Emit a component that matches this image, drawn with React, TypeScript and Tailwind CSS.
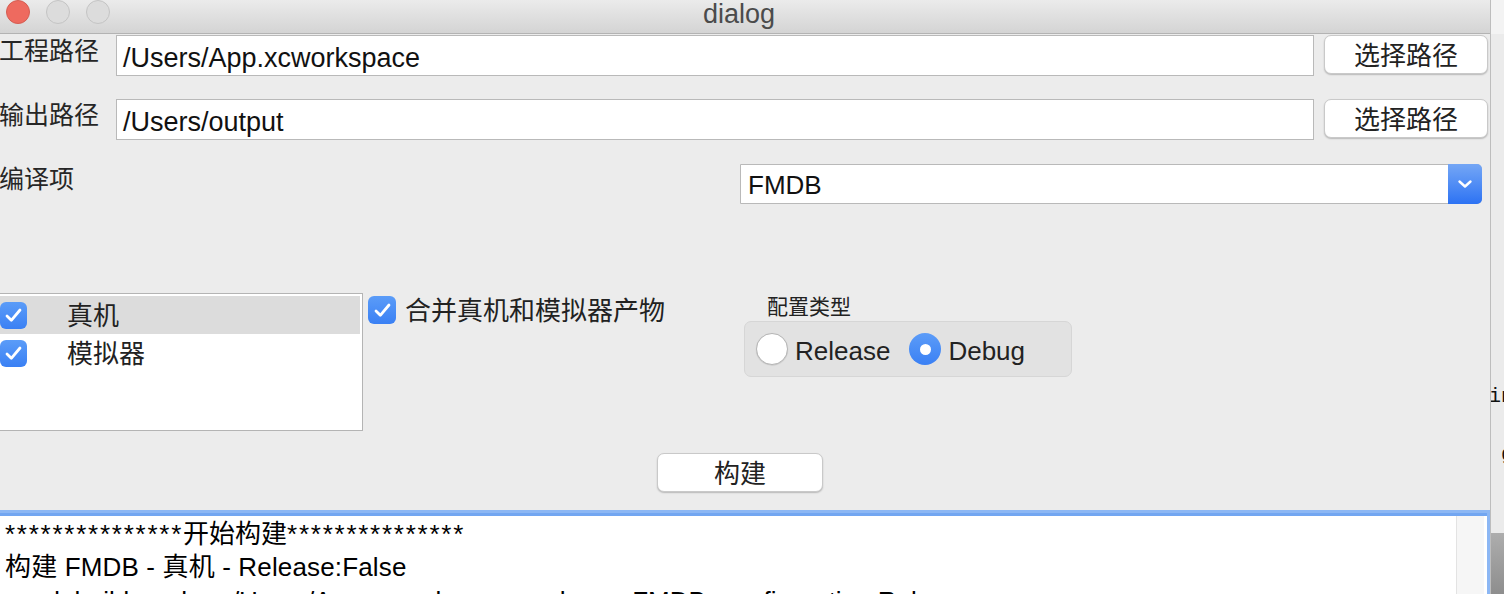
import React from "react";

function Check({ className = "" }: { className?: string }) {
  return (
    <div className={`w-[27px] h-[27px] rounded-[6px] bg-gradient-to-b from-[#5b9cf8] to-[#3a80f4] flex items-center justify-center shrink-0 ${className}`}>
      <svg width="21" height="21" viewBox="0 0 21 21">
        <path d="M4 11 L8.3 15.3 L17 5" fill="none" stroke="#fff" strokeWidth="2.8" strokeLinecap="round" strokeLinejoin="round" />
      </svg>
    </div>
  );
}

function MacButton({ label, className = "" }: { label: string; className?: string }) {
  return (
    <div className={`bg-white rounded-[7px] border border-[#c9c9c9] shadow-[0_1px_1.5px_rgba(0,0,0,0.22)] flex items-center justify-center pt-[3px] text-[26px] text-[#222] ${className}`}>
      {label}
    </div>
  );
}

function Stars() {
  return <span className="tracking-[1.75px]">***************</span>;
}

export default function App() {
  return (
    <div className="w-[1504px] h-[594px] overflow-hidden flex bg-[#ececec] font-['Liberation_Sans','Noto_Sans_CJK_SC',sans-serif]">
      <div className="w-[1491px] h-[594px] shrink-0 flex flex-col border-r border-[#bdbdbd] bg-[#ececec]">
        {/* title bar */}
        <div className="h-[34px] shrink-0 flex items-start bg-gradient-to-b from-[#ebebeb] to-[#d4d4d4] border-b border-[#b3b3b3]">
          <div className="w-[110px] flex items-start gap-[16px] pl-[6px]">
            <div className="w-[24px] h-[24px] rounded-full bg-[#ee6a5f] border border-[#d55d52]" />
            <div className="w-[24px] h-[24px] rounded-full bg-[#dcdcdc] border border-[#c4c4c4]" />
            <div className="w-[24px] h-[24px] rounded-full bg-[#dcdcdc] border border-[#c4c4c4]" />
          </div>
          <div className="flex-1 text-center pr-[122px] text-[27px] leading-[28px] text-[#4b4b4b]">dialog</div>
        </div>

        {/* row 1 */}
        <div className="mt-[1px] h-[41px] flex items-start shrink-0">
          <div className="w-[117px] text-[25px] leading-[30px] text-[#262626] -ml-[1px] mt-[1px]">工程路径</div>
          <div className="w-[1198px] h-[41px] bg-white border border-[#b9b9b9] flex items-center pl-[6px] pt-[5px] text-[27px] text-[#111]">/Users/App.xcworkspace</div>
          <MacButton label="选择路径" className="ml-[10px] w-[164px] h-[39px]" />
        </div>

        {/* row 2 */}
        <div className="mt-[23px] h-[41px] flex items-start shrink-0">
          <div className="w-[117px] text-[25px] leading-[30px] text-[#262626] -ml-[1px] mt-[1px]">输出路径</div>
          <div className="w-[1198px] h-[41px] bg-white border border-[#b9b9b9] flex items-center pl-[6px] pt-[5px] text-[27px] text-[#111]">/Users/output</div>
          <MacButton label="选择路径" className="ml-[10px] w-[164px] h-[39px]" />
        </div>

        {/* row 3 */}
        <div className="mt-[24px] h-[40px] flex items-start shrink-0">
          <div className="w-[741px] text-[25px] leading-[30px] text-[#262626] -ml-[1px]">编译项</div>
          <div className="w-[742px] h-[40px] flex bg-white border border-[#b9b9b9] rounded-r-[5px]">
            <div className="flex-1 flex items-center pl-[7px] pt-[3px] text-[26px] text-[#111]">FMDB</div>
            <div className="w-[34px] -my-[1px] -mr-[1px] rounded-r-[5px] bg-gradient-to-b from-[#74a6f5] to-[#2c72f3] flex items-center justify-center">
              <svg width="16" height="10" viewBox="0 0 16 10">
                <path d="M2.5 2.5 L8 7.5 L13.5 2.5" fill="none" stroke="#fff" strokeWidth="2.4" strokeLinecap="round" strokeLinejoin="round" />
              </svg>
            </div>
          </div>
        </div>

        {/* options */}
        <div className="mt-[89px] flex items-start shrink-0">
          <div className="w-[363px] h-[138px] bg-white border border-[#b4b4b4] border-l-0 p-[2px] pl-0">
            <div className="h-[38px] bg-[#dcdcdc] flex items-center">
              <Check />
              <span className="ml-[40px] pt-[2px] text-[26px] text-[#222]">真机</span>
            </div>
            <div className="h-[38px] flex items-center">
              <Check />
              <span className="ml-[40px] pt-[2px] text-[26px] text-[#222]">模拟器</span>
            </div>
          </div>
          <div className="ml-[5px] mt-[3px] flex items-center h-[28px]">
            <Check className="w-[28px] h-[28px]" />
            <span className="ml-[9px] pt-[3px] text-[26px] text-[#222] whitespace-nowrap">合并真机和模拟器产物</span>
          </div>
          <div className="ml-[79px] flex flex-col">
            <div className="ml-[23px] mt-[1px] text-[21px] leading-[26px] text-[#222]">配置类型</div>
            <div className="w-[328px] h-[56px] mt-[1px] rounded-[7px] bg-[#e2e2e2] border border-[#d6d6d6] flex items-center pl-[11px]">
              <div className="w-[32px] h-[32px] rounded-full bg-white border border-[#b5b5b5] shadow-[0_0.5px_1px_rgba(0,0,0,0.15)]" />
              <span className="ml-[7px] pt-[4px] text-[26px] text-[#222]">Release</span>
              <div className="ml-[19px] w-[32px] h-[32px] rounded-full bg-gradient-to-b from-[#5c9cf8] to-[#3a80f4] flex items-center justify-center">
                <div className="w-[11px] h-[11px] rounded-full bg-white" />
              </div>
              <span className="ml-[7px] pt-[4px] text-[26px] text-[#222]">Debug</span>
            </div>
          </div>
        </div>

        {/* build button */}
        <div className="mt-[22px] flex shrink-0">
          <MacButton label="构建" className="ml-[657px] w-[166px] h-[39px]" />
        </div>

        {/* log */}
        <div className="mt-[18px] flex-1 border-t-[3px] border-r-[3px] border-[#8cb7f4] flex flex-col min-h-0">
          <div className="flex-1 border-t-[3px] border-[#72a6f1] bg-white flex pr-[3px] min-h-0">
            <div className="flex-1 pl-[5px] text-[26px] text-black whitespace-nowrap overflow-hidden">
              <div className="h-[34px] leading-[34px] pt-[1px]"><Stars />开始构建<Stars /></div>
              <div className="h-[34px] leading-[34px] tracking-[0.15px]">构建 FMDB - 真机 - Release:False</div>
              <div className="h-[34px] leading-[34px]">xcodebuild -arch ... /Users/App.xcworkspace -scheme FMDB -configuration Release</div>
            </div>
            <div className="w-[28px] bg-[#f6f6f6] border-l border-[#e3e3e3]" />
          </div>
        </div>
      </div>

      {/* outside strip */}
      <div className="flex-1 flex flex-col overflow-hidden">
        <div className="h-[34px] bg-[#f3f3f3]" />
        <div className="h-[499px] bg-[#ebebeb] font-['Liberation_Mono',monospace] text-[20px] leading-[20px] text-[#111] whitespace-pre -ml-[2px]">
          <div className="mt-[353px]">in</div>
          <div className="mt-[38px]"> g</div>
        </div>
        <div className="flex-1 bg-gradient-to-b from-[#adadad] to-[#8e8e8e]" />
      </div>
    </div>
  );
}
